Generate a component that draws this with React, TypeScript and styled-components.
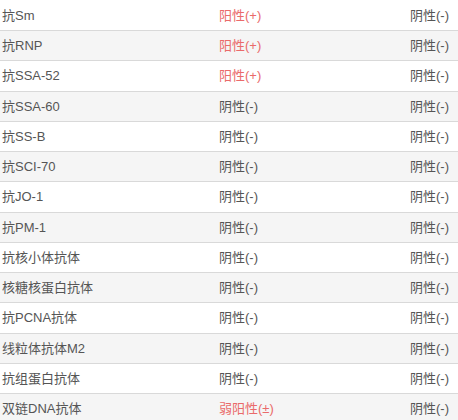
import styled, { createGlobalStyle } from 'styled-components';

type Result = { text: string; positive?: boolean };

const rows: { name: string; mid: Result; ref: Result }[] = [
  { name: '抗Sm', mid: { text: '阳性(+)', positive: true }, ref: { text: '阴性(-)' } },
  { name: '抗RNP', mid: { text: '阳性(+)', positive: true }, ref: { text: '阴性(-)' } },
  { name: '抗SSA-52', mid: { text: '阳性(+)', positive: true }, ref: { text: '阴性(-)' } },
  { name: '抗SSA-60', mid: { text: '阴性(-)' }, ref: { text: '阴性(-)' } },
  { name: '抗SS-B', mid: { text: '阴性(-)' }, ref: { text: '阴性(-)' } },
  { name: '抗SCI-70', mid: { text: '阴性(-)' }, ref: { text: '阴性(-)' } },
  { name: '抗JO-1', mid: { text: '阴性(-)' }, ref: { text: '阴性(-)' } },
  { name: '抗PM-1', mid: { text: '阴性(-)' }, ref: { text: '阴性(-)' } },
  { name: '抗核小体抗体', mid: { text: '阴性(-)' }, ref: { text: '阴性(-)' } },
  { name: '核糖核蛋白抗体', mid: { text: '阴性(-)' }, ref: { text: '阴性(-)' } },
  { name: '抗PCNA抗体', mid: { text: '阴性(-)' }, ref: { text: '阴性(-)' } },
  { name: '线粒体抗体M2', mid: { text: '阴性(-)' }, ref: { text: '阴性(-)' } },
  { name: '抗组蛋白抗体', mid: { text: '阴性(-)' }, ref: { text: '阴性(-)' } },
  { name: '双链DNA抗体', mid: { text: '弱阳性(±)', positive: true }, ref: { text: '阴性(-)' } },
];

const GlobalStyle = createGlobalStyle`
  html, body {
    margin: 0;
    padding: 0;
    background: #fff;
  }
  body {
    font-family: "Liberation Sans", "Noto Sans CJK SC", sans-serif;
  }
`;

const App = () => (
  <>
    <GlobalStyle />
    <Table>
      {rows.map((r, i) => (
        <Row key={r.name} $striped={i % 2 === 1}>
          <Cell>{r.name}</Cell>
          <Cell $positive={r.mid.positive}>{r.mid.text}</Cell>
          <RightCell $positive={r.ref.positive}>{r.ref.text}</RightCell>
        </Row>
      ))}
    </Table>
  </>
);

const Table = styled.div`
  width: 458px;
  display: flex;
  flex-direction: column;
`;

const Row = styled.div<{ $striped: boolean }>`
  display: grid;
  grid-template-columns: 217px 1fr auto;
  align-items: center;
  box-sizing: border-box;
  height: 30.25px;
  padding: 0 9px 2px 2px;
  background: ${(p) => (p.$striped ? '#f5f5f5' : '#fff')};
  border-top: 1px solid #d9d9d9;

  &:first-child {
    height: 30px;
    border-top: none;
  }
`;

const Cell = styled.div<{ $positive?: boolean }>`
  font-size: 13px;
  color: ${(p) => (p.$positive ? '#ea6a6a' : '#555')};
  white-space: nowrap;
`;

const RightCell = styled(Cell)`
  text-align: right;
`;

export default App;
